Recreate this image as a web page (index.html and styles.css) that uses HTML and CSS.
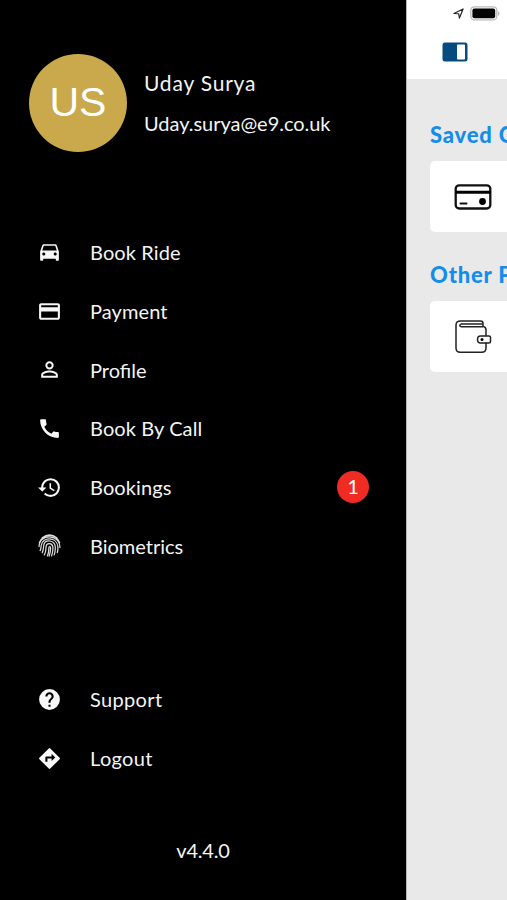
FILE: index.html
```html
<!DOCTYPE html>
<html lang="en">
<head>
<meta charset="utf-8">
<title>Menu</title>
<link rel="stylesheet" href="styles.css">
</head>
<body>
<div class="screen">
  <aside class="drawer">
    <header class="account">
      <div class="avatar">US</div>
      <div class="identity">
        <div class="name">Uday Surya</div>
        <div class="email">Uday.surya@e9.co.uk</div>
      </div>
    </header>
    <nav class="menu">
      <a class="item"><svg class="icon" viewBox="0 0 24 24"><path d="M18.920 5.010C18.720 4.420 18.160 4 17.500 4h-11c-.66 0-1.210.42-1.420 1.010L3 11v8c0 .55.45 1 1 1h1c.55 0 1-.45 1-1v-1h12v1c0 .55.45 1 1 1h1c.55 0 1-.45 1-1v-8l-2.080-5.990zM6.500 15c-.83 0-1.500-.67-1.500-1.500S5.670 12 6.500 12s1.500.67 1.500 1.500S7.330 15 6.500 15zm11 0c-.83 0-1.500-.67-1.500-1.500s.67-1.500 1.500-1.500 1.500.67 1.500 1.500-.67 1.500-1.500 1.500zM5 10l1.500-4.500h11L19 10H5z"/></svg><span class="label">Book Ride</span></a>
      <a class="item"><svg class="icon" viewBox="0 0 24 24"><path d="M20 4H4c-1.110 0-1.990.89-1.990 2L2 18c0 1.110.89 2 2 2h16c1.110 0 2-.89 2-2V6c0-1.110-.89-2-2-2zm0 14H4v-6h16v6zm0-10H4V6h16v2z"/></svg><span class="label">Payment</span></a>
      <a class="item"><svg class="icon" viewBox="0 0 24 24"><path d="M12 5.900a2.100 2.100 0 1 1 0 4.200 2.100 2.100 0 0 1 0-4.200m0 9c2.970 0 6.100 1.460 6.100 2.100v1.100H5.900V17c0-.64 3.130-2.100 6.100-2.100M12 4a4 4 0 1 0 0 8 4 4 0 0 0 0-8zm0 9c-2.670 0-8 1.340-8 4v3h16v-3c0-2.660-5.330-4-8-4z"/></svg><span class="label tight">Profile</span></a>
      <a class="item"><svg class="icon" viewBox="0 0 24 24"><path d="M20.010 15.380c-1.230 0-2.420-.2-3.530-.56a.977.977 0 0 0-1.010.24l-1.570 1.970c-2.830-1.350-5.480-3.900-6.890-6.830l1.950-1.660c.27-.28.35-.67.24-1.020-.37-1.110-.56-2.300-.56-3.530 0-.54-.45-.99-.99-.99H4.190C3.650 3 3 3.240 3 3.990 3 13.280 10.730 21 20.010 21c.71 0 .99-.63.99-1.180v-3.450c0-.54-.45-.99-.99-.99z"/></svg><span class="label">Book By Call</span></a>
      <a class="item"><svg class="icon" viewBox="0 0 24 24"><path d="M13 3a9 9 0 0 0-9 9H1l3.890 3.890.07.14L9 12H6c0-3.870 3.130-7 7-7s7 3.130 7 7-3.130 7-7 7c-1.930 0-3.680-.79-4.940-2.060l-1.420 1.420A8.954 8.954 0 0 0 13 21a9 9 0 0 0 0-18zm-1 5v5l4.280 2.540.72-1.210-3.500-2.080V8H12z"/></svg><span class="label">Bookings</span><span class="badge">1</span></a>
      <a class="item"><svg class="icon print" viewBox="0 0 24 24"><path d="M5 4.600Q12-.9 19 4.600M2.200 9.300C6-.2 18-.2 21.800 9.300M2 13c0-12.500 20-12.500 20 1M3 17c1-2.200.7-3 1-5 1-8.500 15-8.500 16 1 .2 2 0 4-.5 5.800M5 19c1.600-3 1-5.500 1.600-8 1.700-5.500 10.300-4 10.900 2 .2 3-.1 5.500-1 8M7 21c2-3 1.500-6 1.700-8 .6-4 6-3.500 6.500.3.200 3.200-.2 6-1.200 8.700M10 22c1.500-3 1.400-6 1.400-8 .1-1.300 1.500-1.200 1.600.2.100 3-.3 5.300-1.300 8"/></svg><span class="label tight">Biometrics</span></a>
    </nav>
    <nav class="menu secondary">
      <a class="item"><svg class="icon" viewBox="0 0 24 24"><path d="M12 2a10 10 0 1 0 0 20 10 10 0 0 0 0-20zm1 17h-2v-2h2v2zm2.070-7.750-.9.920C13.450 12.900 13 13.500 13 15h-2v-.5c0-1.100.45-2.100 1.170-2.830l1.240-1.260c.37-.36.59-.86.59-1.410a2 2 0 1 0-4 0H8a4 4 0 1 1 8 0c0 .88-.36 1.680-.93 2.250z"/></svg><span class="label wide">Support</span></a>
      <a class="item"><svg class="icon" viewBox="0 0 24 24"><path d="m21.710 11.290-9-9a.996.996 0 0 0-1.410 0l-9 9a.996.996 0 0 0 0 1.410l9 9c.39.39 1.020.39 1.410 0l9-9a.996.996 0 0 0 0-1.410zM14 14.500V12h-4v3H8v-4c0-.55.45-1 1-1h5V7.500l3.500 3.500-3.500 3.500z"/></svg><span class="label wide">Logout</span></a>
    </nav>
    <div class="version">v4.4.0</div>
  </aside>
  <main class="page">
    <header class="topbar">
      <div class="status">
        <svg class="location" viewBox="0 0 12 12"><path d="M1 6 11 1 7 11 6.200 6.300Z"/></svg>
        <svg class="battery" viewBox="0 0 30 15"><rect x=".8" y=".8" width="26" height="13" rx="3.500" fill="#fff" stroke="#bbb" stroke-width="1.300"/><rect x="2.400" y="2.400" width="22.800" height="9.800" rx="2"/><path d="M28 5q3 2.300 0 5z" fill="#bbb"/></svg>
      </div>
      <svg class="toggle" viewBox="0 0 26 20"><rect x=".5" y=".5" width="25" height="19" rx="2.500" fill="#064b80"/><rect x="15" y="2.500" width="8" height="15" rx=".7" fill="#fff"/></svg>
    </header>
    <section class="content">
      <h2>Saved Cards</h2>
      <div class="card"><svg class="pay" viewBox="0 0 38 38"><rect x="1.700" y="7.300" width="34.600" height="23.200" rx="3.500" fill="none" stroke="#111" stroke-width="2.300"/><path d="M1.500 14.200h35" stroke="#000" stroke-width="3"/><path d="M6.500 25.500h6" stroke="#111" stroke-width="2" stroke-linecap="round"/><circle cx="28.500" cy="23.500" r="3.400"/></svg></div>
      <h2>Other Payments</h2>
      <div class="card"><svg class="pay" viewBox="0 0 38 38"><g fill="none" stroke="#222" stroke-width="1.500" stroke-linejoin="round"><path d="M32 18V12q0-3-3-3.800V5.500q0-2.500-2.500-2.500H6.500Q2 3 2 7v23q0 4.300 4.300 4.300h21.400q4.300 0 4.300-4.300V24.500"/><path d="M29 8.700H7q-2.500-1.300 0-2.600h21.500"/><path d="M26.500 18H35q1.500 0 1.500 1.500v4q0 1.500-1.500 1.500h-8.500q-3 0-3-3.500t3-3.500z"/></g><circle cx="28" cy="21.500" r="1.500"/></svg></div>
    </section>
  </main>
</div>
</body>
</html>
```
FILE: styles.css
```css
* { box-sizing: border-box; }
body { margin: 0; background: #000; font-family: Lato, "Open Sans", sans-serif; }
.screen { display: flex; width: 507px; height: 900px; overflow: hidden; }

.drawer { flex: 0 0 406px; display: flex; flex-direction: column; background: #000; color: #f4f4f4; font-size: 20px; }
.account { display: flex; margin: 54px 0 0 29px; height: 99px; }
.avatar { flex: none; width: 98px; height: 98px; border-radius: 50%; background: #c9a94b; color: #fff; font: 41px/96px "Liberation Sans", sans-serif; text-align: center; }
.identity { margin: 9px 0 0 17px; line-height: 40px; white-space: nowrap; }
.name { font-size: 21px; letter-spacing: .8px; }
.email { font-size: 20px; letter-spacing: -.03px; }

.menu { margin-top: 70px; }
.secondary { margin-top: 95px; }
.item { display: flex; align-items: center; height: 58.700px; padding: 0 37px; white-space: nowrap; }
.icon { flex: none; width: 25px; height: 25px; margin-right: 28px; fill: #f7f7f7; }
.print { fill: none; stroke: #ddd; stroke-width: 1.200; stroke-linecap: round; }
.label { letter-spacing: .1px; }
.tight { letter-spacing: 0; }
.wide { letter-spacing: .35px; }
.badge { width: 32px; height: 32px; margin-left: auto; border-radius: 50%; background: #ef2b23; color: #fff; line-height: 31px; text-align: center; }
.version { margin-top: 47px; line-height: 30px; letter-spacing: -.2px; text-align: center; }

.page { flex: 1; min-width: 0; background: #e9e9e9; border-left: 1px solid #b5b5b5; overflow: hidden; }
.topbar { height: 79px; background: #fff; padding: 6px 0 0 35px; }
.status { display: flex; align-items: center; height: 15px; padding-left: 11px; }
.location { flex: none; width: 11px; height: 11px; margin-right: 6px; fill: none; stroke: #222; stroke-width: 1.300; stroke-linejoin: round; }
.battery { flex: none; width: 30px; height: 15px; }
.toggle { display: block; width: 26px; height: 20px; margin-top: 21px; }
.content { padding: 41px 0 0 23px; }
h2 { margin: 0; height: 30px; color: #158de8; font-size: 22px; line-height: 30px; font-weight: 900; letter-spacing: .8px; white-space: nowrap; }
.card { display: flex; align-items: center; width: 180px; height: 71px; margin: 11px 0 28px; padding-left: 24px; border-radius: 5px; background: #fff; }
.pay { width: 38px; height: 38px; }
```
